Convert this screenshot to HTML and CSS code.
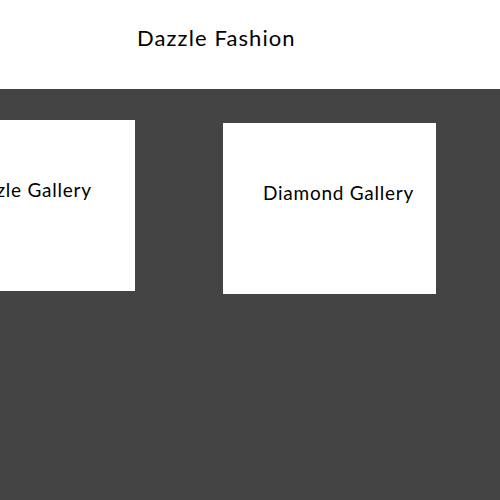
FILE: index.html
```html
<!DOCTYPE html>
<html lang="en">
<head>
    <meta charset="UTF-8">
    <meta name="viewport" content="width=device-width, initial-scale=1.0">
    <title>Dazzle Fashion</title>
    <link rel="stylesheet" href="styles.css">
</head>
<body>
    <header>
        <h1>Dazzle Fashion</h1>
    </header>

    <div class="gallery">
        <!-- 輪播 -->
        <div class="track">
            <div class="card card-first">
                <p>Dazzle Gallery</p>
            </div>
            <div class="card card-second">
                <p>Diamond Gallery</p>
            </div>
        </div>
    </div>
</body>
</html>
```

FILE: styles.css
```css
/* 基本樣式 */
body {
    font-family: Lato, "Open Sans", sans-serif;
    margin: 0;
    padding: 0;
    background-color: #444444;
    height: 500px;
    overflow: hidden;
}

header {
    background-color: #fff;
    height: 89px;
    padding-left: 137px;
    box-sizing: border-box;
}

header h1 {
    margin: 0;
    padding-top: 24px;
    font-size: 22px;
    font-weight: normal;
    color: #000;
    letter-spacing: 1.1px;
}

.gallery {
    overflow: hidden;
}

.track {
    display: flex;
    gap: 88px;
    margin-left: -78px;
}

.card {
    flex: 0 0 213px;
    height: 171px;
    background-color: #fff;
    box-sizing: border-box;
    padding: 58px 0 0 40px;
}

.card-first {
    margin-top: 31px;
}

.card-second {
    margin-top: 34px;
}

.card p {
    margin: 0;
    font-size: 19px;
    color: #000;
    letter-spacing: 0.75px;
}
```
